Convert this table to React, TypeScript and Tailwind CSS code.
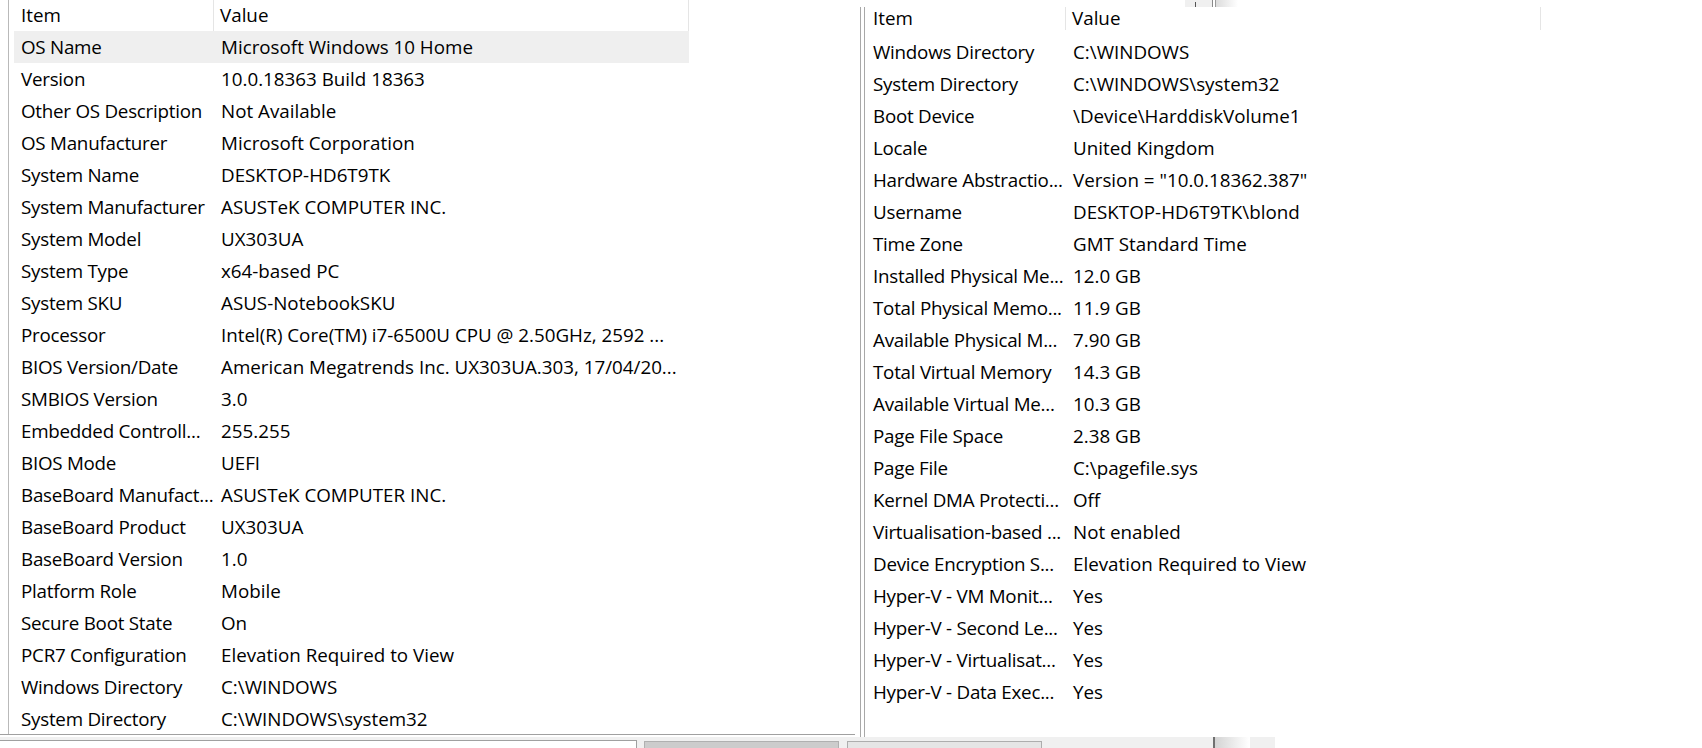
const leftRows: [string, string][] = [
  ["OS Name", "Microsoft Windows 10 Home"],
  ["Version", "10.0.18363 Build 18363"],
  ["Other OS Description", "Not Available"],
  ["OS Manufacturer", "Microsoft Corporation"],
  ["System Name", "DESKTOP-HD6T9TK"],
  ["System Manufacturer", "ASUSTeK COMPUTER INC."],
  ["System Model", "UX303UA"],
  ["System Type", "x64-based PC"],
  ["System SKU", "ASUS-NotebookSKU"],
  ["Processor", "Intel(R) Core(TM) i7-6500U CPU @ 2.50GHz, 2592 ..."],
  ["BIOS Version/Date", "American Megatrends Inc. UX303UA.303, 17/04/20..."],
  ["SMBIOS Version", "3.0"],
  ["Embedded Controll...", "255.255"],
  ["BIOS Mode", "UEFI"],
  ["BaseBoard Manufact...", "ASUSTeK COMPUTER INC."],
  ["BaseBoard Product", "UX303UA"],
  ["BaseBoard Version", "1.0"],
  ["Platform Role", "Mobile"],
  ["Secure Boot State", "On"],
  ["PCR7 Configuration", "Elevation Required to View"],
  ["Windows Directory", "C:\\WINDOWS"],
  ["System Directory", "C:\\WINDOWS\\system32"],
];

const rightRows: [string, string][] = [
  ["Windows Directory", "C:\\WINDOWS"],
  ["System Directory", "C:\\WINDOWS\\system32"],
  ["Boot Device", "\\Device\\HarddiskVolume1"],
  ["Locale", "United Kingdom"],
  ["Hardware Abstractio...", 'Version = "10.0.18362.387"'],
  ["Username", "DESKTOP-HD6T9TK\\blond"],
  ["Time Zone", "GMT Standard Time"],
  ["Installed Physical Me...", "12.0 GB"],
  ["Total Physical Memo...", "11.9 GB"],
  ["Available Physical M...", "7.90 GB"],
  ["Total Virtual Memory", "14.3 GB"],
  ["Available Virtual Me...", "10.3 GB"],
  ["Page File Space", "2.38 GB"],
  ["Page File", "C:\\pagefile.sys"],
  ["Kernel DMA Protecti...", "Off"],
  ["Virtualisation-based ...", "Not enabled"],
  ["Device Encryption S...", "Elevation Required to View"],
  ["Hyper-V - VM Monit...", "Yes"],
  ["Hyper-V - Second Le...", "Yes"],
  ["Hyper-V - Virtualisat...", "Yes"],
  ["Hyper-V - Data Exec...", "Yes"],
];

function Header({ className }: { className: string }) {
  return (
    <div className={`flex w-[675px] shrink-0 ${className}`}>
      <div className="w-[200px] pl-[7px] border-r border-[#e5e5e5] flex items-center">Item</div>
      <div className="flex-1 pl-[6px] border-r border-[#e5e5e5] flex items-center">Value</div>
    </div>
  );
}

function Rows({ rows, selected }: { rows: [string, string][]; selected?: number }) {
  return (
    <>
      {rows.map(([item, value], i) => (
        <div
          key={item + i}
          className={`flex h-[32px] w-[675px] shrink-0 items-center whitespace-nowrap ${i === selected ? "bg-[#efefef]" : ""}`}
        >
          <div className="w-[200px] shrink-0 pl-[7px] tracking-[-0.25px]">{item}</div>
          <div className="flex-1 pl-[7px] overflow-hidden">{value}</div>
        </div>
      ))}
    </>
  );
}

export default function App() {
  return (
    <div className="w-[1702px] h-[748px] bg-white overflow-hidden flex flex-col text-black text-[18.8px] font-['Open_Sans',sans-serif]">
      <div className="flex h-[737px]">
        {/* left window */}
        <div className="w-[855px] h-[735px] shrink-0 border-b border-[#a0a0a0] flex overflow-hidden">
          <div className="w-[8px]" />
          <div className="w-px bg-[#b9b9b9]" />
          <div className="pl-[5px] flex flex-col overflow-hidden">
            <Header className="h-[31px]" />
            <Rows rows={leftRows} selected={0} />
          </div>
        </div>

        {/* right window */}
        <div className="flex-1 flex flex-col">
          <div className="h-[7px] flex shrink-0">
            <div className="w-[330px]" />
            <div className="w-[27px] bg-[#f0f0f0] flex items-end">
              <div className="ml-[10px] w-px h-[5px] bg-[#555]" />
            </div>
            <div className="w-px bg-[#8a8a8a]" />
            <div className="w-[2px] bg-white" />
            <div className="w-px bg-[#9a9a9a]" />
            <div className="w-[22px] bg-gradient-to-r from-[#dcdcdc] to-white" />
          </div>
          <div className="flex-1 flex pl-[5px]">
            <div className="w-px bg-[#a8a8a8]" />
            <div className="w-[3px]" />
            <div className="w-px bg-[#a8a8a8]" />
            <div className="pl-px flex flex-col">
              <Header className="h-[29px] pb-[6px] leading-[23px]" />
              <Rows rows={rightRows} />
            </div>
          </div>
        </div>
      </div>

      {/* bottom strip */}
      <div className="h-[11px] flex">
        <div className="w-[1213px] bg-[#f0f0f0] flex items-end">
          <div className="w-[637px] h-[8px] bg-white border-t border-r border-[#a0a0a0]" />
          <div className="ml-[7px] w-[195px] h-[7px] bg-[#cccccc] border-t border-x border-[#b0b0b0]" />
          <div className="ml-[8px] w-[195px] h-[7px] bg-[#e5e5e5] border-t border-x border-[#adadad]" />
        </div>
        <div className="w-[2px] bg-[#707070]" />
        <div className="w-[34px] bg-gradient-to-r from-[#d4d4d4] to-white" />
        <div className="w-px" />
        <div className="w-[25px] bg-[#f0f0f0]" />
        <div className="flex-1 bg-white" />
      </div>
    </div>
  );
}
